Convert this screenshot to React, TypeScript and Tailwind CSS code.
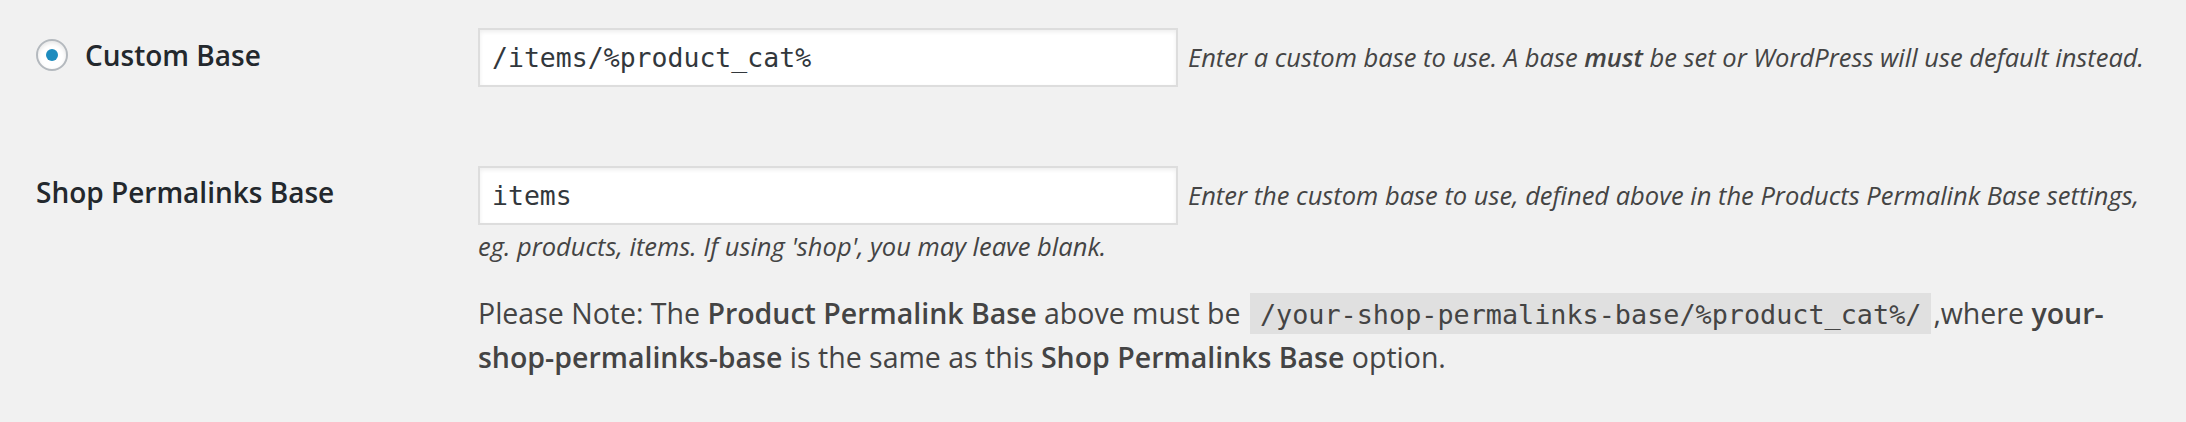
import React from 'react';

// Font stacks
const SANS = "font-['Open_Sans','Liberation_Sans',sans-serif]";
const MONO = "font-['DejaVu_Sans_Mono','Liberation_Mono',monospace]";

function Radio({ checked }: { checked?: boolean }) {
  return (
    <span className="flex h-[32px] w-[32px] shrink-0 items-center justify-center rounded-full border-2 border-[#b4b9be] bg-white shadow-[inset_0_2px_4px_rgba(0,0,0,0.1)]">
      {checked && <span className="h-[12px] w-[12px] rounded-full bg-[#1e8cbe]" />}
    </span>
  );
}

function TextInput({ value }: { value: string }) {
  return (
    <input
      type="text"
      readOnly
      defaultValue={value}
      className={`${MONO} inline-block h-[59px] w-[700px] border-2 border-[#dddddd] bg-white px-[12px] align-baseline text-[26.5px] leading-[31px] text-[#32373c] shadow-[inset_0_2px_4px_rgba(0,0,0,0.07)] outline-none`}
    />
  );
}

export default function App() {
  return (
    <div className={`${SANS} min-h-[422px] w-full bg-[#f1f1f1] pl-[36px] pr-[26px] pt-[28px] text-[#444444]`}>
      {/* Custom base row */}
      <div className="flex items-start">
        <div className="flex w-[442px] shrink-0 items-center gap-[17px] pt-[8px]">
          <Radio checked />
          <span className="text-[28px] font-semibold leading-[38px] text-[#23282d]">Custom Base</span>
        </div>
        <div className="min-w-0 flex-1">
          <p className="text-[25.5px] leading-[42px]">
            <TextInput value="/items/%product_cat%" />
            <span className="ml-[10px] italic">
              Enter a custom base to use. A base <strong className="font-semibold">must</strong> be set or WordPress will use default instead.
            </span>
          </p>
        </div>
      </div>

      {/* Shop permalinks base row */}
      <div className="mt-[79px] flex items-start">
        <div className="w-[442px] shrink-0 pt-[7px]">
          <span className="text-[28px] font-semibold leading-[38px] text-[#23282d]">Shop Permalinks Base</span>
        </div>
        <div className="min-w-0 flex-1">
          <p className="text-[25.5px] leading-[42px]">
            <TextInput value="items" />
            <span className="ml-[10px] italic">
              Enter the custom base to use, defined above in the Products Permalink Base settings, eg. products, items. If using 'shop', you may leave blank.
            </span>
          </p>
          <p className="mt-[25px] text-[28.5px] leading-[42px]">
            Please Note: The <strong className="font-semibold">Product Permalink Base</strong> above must be{' '}
            <code className={`${MONO} mx-[2px] bg-[#e0e0e0] px-[10px] pb-[4px] pt-[6px] text-[26.8px]`}>
              /your-shop-permalinks-base/%product_cat%/
            </code>
            ,where <strong className="font-semibold">your-shop-permalinks-base</strong> is the same as this{' '}
            <strong className="font-semibold">Shop Permalinks Base</strong> option.
          </p>
        </div>
      </div>
    </div>
  );
}
